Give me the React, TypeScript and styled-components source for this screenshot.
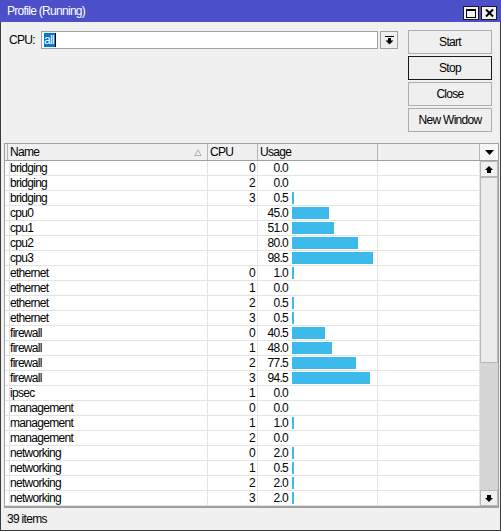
import React from "react";
import styled, { createGlobalStyle } from "styled-components";

const GlobalStyle = createGlobalStyle`
  html, body { margin: 0; padding: 0; background: #f0f0f0; }
  body {
    font-family: "Liberation Sans", Arial, sans-serif;
    font-size: 12px;
    letter-spacing: -0.7px;
    color: #000;
  }
`;

const Window = styled.div`
  width: 501px;
  height: 531px;
  display: flex;
  flex-direction: column;
  background: #f0f0f0;
  overflow: hidden;
`;

const TitleBar = styled.div`
  height: 22px;
  flex: none;
  background: #4b50c9;
  color: #fff;
  display: flex;
  align-items: center;
  justify-content: space-between;
  padding: 0 4px 0 7px;
`;

const TitleText = styled.span`
  font-size: 12px;
  line-height: 14px;
`;

const TitleButtons = styled.div`
  display: flex;
  gap: 2px;
  margin-top: 4px;
`;

const TitleButton = styled.div`
  width: 16px;
  height: 14px;
  box-sizing: border-box;
  background: #f0f0f0;
  border: 1px solid #1a1a1a;
  display: flex;
  align-items: center;
  justify-content: center;
`;

const Body = styled.div`
  flex: 1;
  display: flex;
  flex-direction: column;
  border: 1px solid #3c3c3c;
  border-top: none;
  min-height: 0;
`;

const TopArea = styled.div`
  height: 121px;
  flex: none;
  display: flex;
  box-sizing: border-box;
  padding: 8px 8px 0 8px;
`;

const FormRow = styled.div`
  display: flex;
  align-items: center;
  margin-top: 1px;
  height: 18px;
`;

const Label = styled.span`
  width: 32px;
`;

const TextBox = styled.div`
  width: 337px;
  height: 18px;
  box-sizing: border-box;
  background: #fff;
  border: 1px solid #a0a0a0;
  display: flex;
  align-items: center;
  padding-left: 2px;
`;

const Selected = styled.span`
  background: #0078d7;
  color: #fff;
  line-height: 14px;
  padding: 0 1px 0 0;
`;

const Caret = styled.span`
  width: 1px;
  height: 14px;
  background: #000;
`;

const DropButton = styled.div`
  width: 18px;
  height: 18px;
  box-sizing: border-box;
  margin-left: 2px;
  border: 1px solid #a0a0a0;
  background: #f0f0f0;
  display: flex;
  align-items: center;
  justify-content: center;
`;

const ButtonCol = styled.div`
  margin-left: auto;
  display: flex;
  flex-direction: column;
  gap: 2px;
`;

const Button = styled.div<{ $focused?: boolean }>`
  width: 84px;
  height: 24px;
  box-sizing: border-box;
  border: 1px solid ${(p) => (p.$focused ? "#1a1a1a" : "#adadad")};
  background: #efefef;
  display: flex;
  align-items: center;
  justify-content: center;
`;

const GridFrame = styled.div`
  flex: 1;
  min-height: 0;
  margin: 0 1px 0 3px;
  display: flex;
  border-left: 1px solid #a0a0a0;
  border-right: 1px solid #a0a0a0;
  border-bottom: 2px solid #a0a0a0;
  overflow: hidden;
`;

const Table = styled.div`
  flex: 1;
  display: flex;
  flex-direction: column;
  background: #fff;
  min-width: 0;
`;

const COLS = "3px 200px 50px 120px 1fr";

const HeaderRow = styled.div`
  display: grid;
  grid-template-columns: ${COLS};
  height: 18px;
  box-sizing: border-box;
  border-top: 1px solid #a0a0a0;
  border-bottom: 1px solid #a0a0a0;
  background: #f0f0f0;
`;

const HeaderCell = styled.div`
  border-right: 1px solid #b4b4b4;
  padding-left: 2px;
  line-height: 16px;
  display: flex;
  align-items: center;
  justify-content: space-between;
  overflow: hidden;
`;

const SortMark = styled.svg`
  margin-right: 5px;
`;

const Row = styled.div`
  display: grid;
  grid-template-columns: ${COLS};
  height: 15px;
  box-sizing: border-box;
  border-bottom: 1px solid #e3e3e3;
`;

const Cell = styled.div<{ $right?: boolean }>`
  border-right: 1px solid #e3e3e3;
  line-height: 14px;
  padding: 0 2px;
  text-align: ${(p) => (p.$right ? "right" : "left")};
  white-space: nowrap;
  overflow: hidden;
`;

const UsageCell = styled.div`
  border-right: 1px solid #e3e3e3;
  display: flex;
  align-items: center;
  line-height: 14px;
`;

const UsageValue = styled.span`
  width: 30px;
  text-align: right;
  flex: none;
`;

const Bar = styled.div`
  height: 12px;
  margin-left: 4px;
  background: #3dbaec;
  flex: none;
`;

const ScrollCol = styled.div`
  width: 18px;
  flex: none;
  display: flex;
  flex-direction: column;
  background: #d6d6d6;
`;

const ScrollHeadButton = styled.div`
  height: 18px;
  box-sizing: border-box;
  border-top: 1px solid #a0a0a0;
  border-bottom: 1px solid #a0a0a0;
  background: #f6f6f6;
  display: flex;
  align-items: center;
  justify-content: center;
`;

const ScrollArrow = styled.div`
  height: 16px;
  flex: none;
  box-sizing: border-box;
  border: 1px solid #b8b8b8;
  background: #f0f0f0;
  display: flex;
  align-items: center;
  justify-content: center;
`;

const Thumb = styled.div`
  height: 186px;
  flex: none;
  box-sizing: border-box;
  border: 1px solid #b8b8b8;
  background: #ececec;
`;

const Track = styled.div`
  flex: 1;
`;

const StatusBar = styled.div`
  height: 22px;
  flex: none;
  padding-left: 6px;
  display: flex;
  align-items: center;
`;

type Item = { name: string; cpu: string; usage: number };

const items: Item[] = [
  { name: "bridging", cpu: "0", usage: 0.0 },
  { name: "bridging", cpu: "2", usage: 0.0 },
  { name: "bridging", cpu: "3", usage: 0.5 },
  { name: "cpu0", cpu: "", usage: 45.0 },
  { name: "cpu1", cpu: "", usage: 51.0 },
  { name: "cpu2", cpu: "", usage: 80.0 },
  { name: "cpu3", cpu: "", usage: 98.5 },
  { name: "ethernet", cpu: "0", usage: 1.0 },
  { name: "ethernet", cpu: "1", usage: 0.0 },
  { name: "ethernet", cpu: "2", usage: 0.5 },
  { name: "ethernet", cpu: "3", usage: 0.5 },
  { name: "firewall", cpu: "0", usage: 40.5 },
  { name: "firewall", cpu: "1", usage: 48.0 },
  { name: "firewall", cpu: "2", usage: 77.5 },
  { name: "firewall", cpu: "3", usage: 94.5 },
  { name: "ipsec", cpu: "1", usage: 0.0 },
  { name: "management", cpu: "0", usage: 0.0 },
  { name: "management", cpu: "1", usage: 1.0 },
  { name: "management", cpu: "2", usage: 0.0 },
  { name: "networking", cpu: "0", usage: 2.0 },
  { name: "networking", cpu: "1", usage: 0.5 },
  { name: "networking", cpu: "2", usage: 2.0 },
  { name: "networking", cpu: "3", usage: 2.0 },
];

const barWidth = (v: number) => (v <= 0 ? 0 : Math.max(2, Math.round(v * 0.825)));

export default function App() {
  return (
    <>
      <GlobalStyle />
      <Window>
        <TitleBar>
          <TitleText>Profile (Running)</TitleText>
          <TitleButtons>
            <TitleButton>
              <svg width="10" height="9" viewBox="0 0 10 9">
                <rect x="0.5" y="0.5" width="9" height="8" fill="none" stroke="#000" />
                <rect x="0" y="0" width="10" height="2" fill="#000" />
              </svg>
            </TitleButton>
            <TitleButton>
              <svg width="9" height="8" viewBox="0 0 9 8">
                <path d="M1 0.5 L8 7.5 M8 0.5 L1 7.5" stroke="#000" strokeWidth="2" />
              </svg>
            </TitleButton>
          </TitleButtons>
        </TitleBar>
        <Body>
          <TopArea>
            <FormRow>
              <Label>CPU:</Label>
              <TextBox>
                <Selected>all</Selected>
                <Caret />
              </TextBox>
              <DropButton>
                <svg width="9" height="9" viewBox="0 0 9 9">
                  <rect x="0" y="0" width="9" height="1" fill="#000" />
                  <rect x="3" y="2" width="3" height="3" fill="#000" />
                  <path d="M0.5 4.5 H8.5 L4.5 8.5 Z" fill="#000" />
                </svg>
              </DropButton>
            </FormRow>
            <ButtonCol>
              <Button>Start</Button>
              <Button $focused>Stop</Button>
              <Button>Close</Button>
              <Button>New Window</Button>
            </ButtonCol>
          </TopArea>
          <GridFrame>
            <Table>
              <HeaderRow>
                <HeaderCell />
                <HeaderCell>
                  <span>Name</span>
                  <SortMark width="8" height="7" viewBox="0 0 8 7">
                    <path d="M4 0.8 L7.3 6.5 H0.7 Z" fill="none" stroke="#b0b0b0" />
                  </SortMark>
                </HeaderCell>
                <HeaderCell>CPU</HeaderCell>
                <HeaderCell>Usage</HeaderCell>
                <HeaderCell />
              </HeaderRow>
              {items.map((it, i) => (
                <Row key={i}>
                  <Cell />
                  <Cell>{it.name}</Cell>
                  <Cell $right>{it.cpu}</Cell>
                  <UsageCell>
                    <UsageValue>{it.usage.toFixed(1)}</UsageValue>
                    {barWidth(it.usage) > 0 && (
                      <Bar style={{ width: barWidth(it.usage) }} />
                    )}
                  </UsageCell>
                  <Cell />
                </Row>
              ))}
            </Table>
            <ScrollCol>
              <ScrollHeadButton>
                <svg width="9" height="5" viewBox="0 0 9 5">
                  <path d="M0 0 H9 L4.5 5 Z" fill="#000" />
                </svg>
              </ScrollHeadButton>
              <ScrollArrow>
                <svg width="8" height="7" viewBox="0 0 8 7">
                  <path d="M0 4 L4 0 L8 4 Z" fill="#000" />
                  <rect x="2" y="4" width="4" height="3" fill="#000" />
                </svg>
              </ScrollArrow>
              <Thumb />
              <Track />
              <ScrollArrow>
                <svg width="8" height="7" viewBox="0 0 8 7">
                  <rect x="2" y="0" width="4" height="3" fill="#000" />
                  <path d="M0 3 L8 3 L4 7 Z" fill="#000" />
                </svg>
              </ScrollArrow>
            </ScrollCol>
          </GridFrame>
          <StatusBar>39 items</StatusBar>
        </Body>
      </Window>
    </>
  );
}
